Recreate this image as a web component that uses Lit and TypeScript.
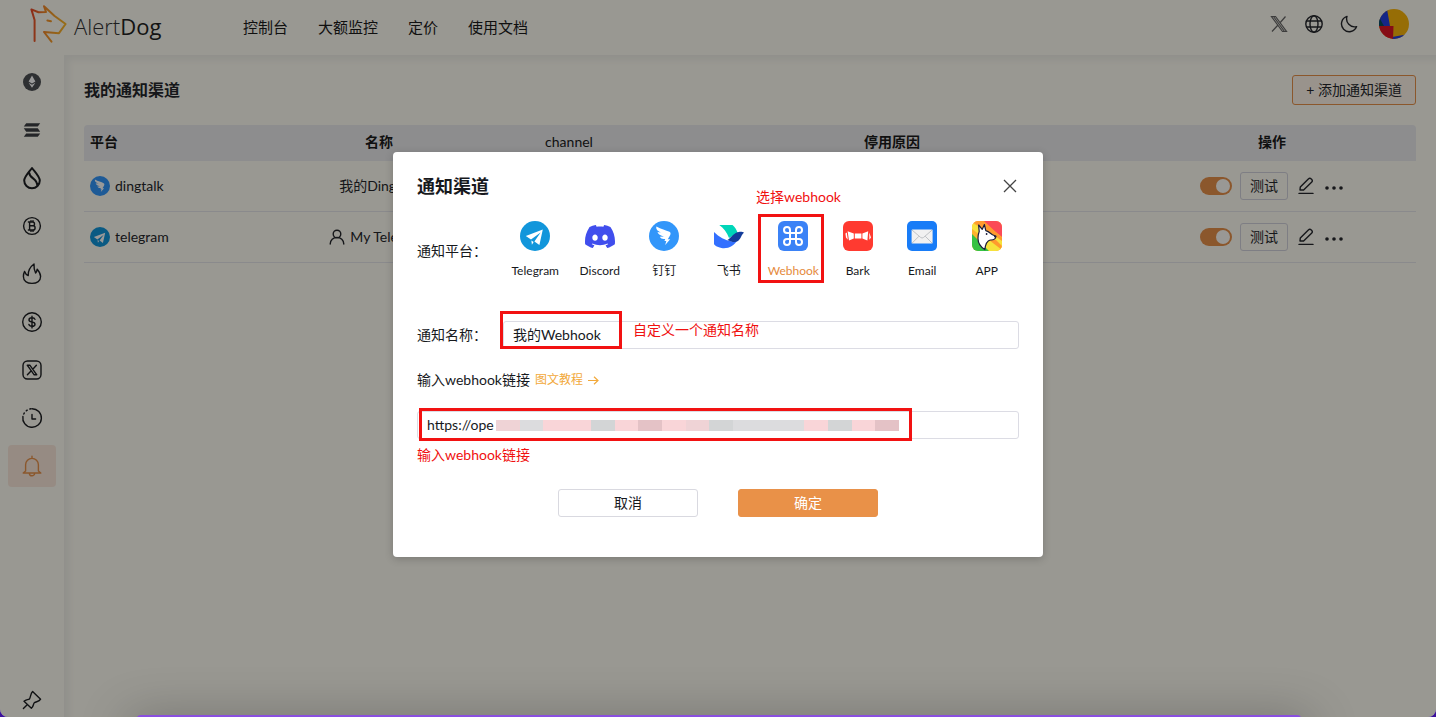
import { LitElement, html, css, svg } from "lit";
import { customElement, state } from "lit/decorators.js";

const telegram = svg`
  <circle cx="15" cy="15" r="15" fill="#1296db"></circle>
  <path fill="#fff" d="M5.8 15 22.8 8.5 19.4 24 14.4 20.4 20.6 11.6 11 18.6Z"></path>
  <path fill="#fff" d="M11.4 19.4 13.6 20.9 11.9 23.8Z"></path>`;

const dingtalk = svg`
  <circle cx="15" cy="15" r="15" fill="#3296fa"></circle>
  <path fill="#fff" d="M7.4 5.4C12 8 17 9 20.5 10.8 22 11.8 21.7 13 21 14.5L18.8 18.2H21.2L16.2 24 17.3 19.9H15.5L16.2 17.9C13.5 18.5 12 17.5 10.8 15.8L15 15.6C11.5 14.8 9 13.2 8.5 11L13 11.8C9.5 10.5 6.5 8.5 7.4 5.4Z"></path>`;

const discord = svg`
  <g transform="translate(0 .5) scale(1.25)"><path fill="#404eed" d="M20.317 4.37a19.79 19.79 0 0 0-4.885-1.515.074.074 0 0 0-.079.037c-.21.375-.444.865-.608 1.25-1.845-.277-3.68-.277-5.487 0-.163-.394-.405-.875-.617-1.25a.077.077 0 0 0-.079-.037 19.736 19.736 0 0 0-4.885 1.515.07.07 0 0 0-.032.028C.533 9.046-.319 13.58.099 18.058a.082.082 0 0 0 .031.056c2.053 1.508 4.041 2.423 5.993 3.03a.078.078 0 0 0 .084-.028c.462-.63.873-1.295 1.226-1.994a.076.076 0 0 0-.042-.106c-.652-.248-1.274-.55-1.872-.892a.077.077 0 0 1-.008-.128c.126-.094.252-.192.372-.291a.074.074 0 0 1 .078-.011c3.928 1.794 8.18 1.794 12.061 0a.074.074 0 0 1 .079.01c.12.099.246.198.373.292a.077.077 0 0 1-.007.128 12.3 12.3 0 0 1-1.873.891.077.077 0 0 0-.04.107c.36.698.771 1.363 1.225 1.993a.076.076 0 0 0 .084.029c1.961-.607 3.95-1.522 6.002-3.03a.077.077 0 0 0 .032-.055c.5-5.177-.838-9.674-3.549-13.66a.061.061 0 0 0-.031-.029zM8.02 15.331c-1.183 0-2.157-1.086-2.157-2.419s.956-2.419 2.157-2.419c1.21 0 2.176 1.095 2.157 2.419 0 1.333-.956 2.419-2.157 2.419zm7.975 0c-1.183 0-2.157-1.086-2.157-2.419s.955-2.419 2.157-2.419c1.21 0 2.176 1.095 2.157 2.419 0 1.333-.946 2.419-2.157 2.419z"></path></g>`;

const feishu = svg`
  <path fill="#00d6b9" d="M5.3 4H18.5C21 6 23 9.5 23.6 12L15 17C13 11.5 9.5 7 5.3 4Z"></path>
  <path fill="#3370ff" d="M0 11C5 16 11 19.5 18 20.6 20.4 20.8 22.4 19.5 23.6 18.5 20.5 25 14 28 7.5 27 2.5 26 0 24 0 22.8Z"></path>
  <path fill="#133c9a" d="M13.4 19C18 16 20 11.2 25 10.9 27.5 10.7 29 11 30 11.8 27.3 13.6 27 18 24 20 21 22 17.4 20.8 13.4 19Z"></path>`;

const webhook = svg`
  <rect width="30" height="30" rx="6" fill="#3b82f6"></rect>
  <path transform="translate(3 3)" fill="none" stroke="#fff" stroke-width="2" d="M15 6v12a3 3 0 1 0 3-3H6a3 3 0 1 0 3 3V6a3 3 0 1 0-3 3h12a3 3 0 1 0-3-3"></path>`;

const bark = svg`
  <rect width="30" height="30" rx="6" fill="#ff3a30"></rect>
  <path fill="#fff" d="M11.8 12.6H18.4V17.6H11.8ZM10.8 12.4 4.6 10.2 6 19.6 10.8 17.6ZM19.4 12.4 25.2 10.2 24.4 19.6 19.4 17.6ZM3.8 11.4 2.4 12.4 3 16.6 4.8 18.8ZM26.2 11.4 26.4 18.8 28 16.4Z"></path>`;

const email = svg`
  <rect width="30" height="30" rx="5" fill="#187cf7"></rect>
  <rect x="4.6" y="8.6" width="21" height="14" rx="1" fill="#f1f1f1"></rect>
  <path fill="none" stroke="#b9bcc0" stroke-width=".9" d="M5 9 13.6 16.4Q15.1 17.6 16.6 16.4L25.2 9M5 22.2 12 15.2M25.2 22.2 18.2 15.2"></path>`;

const appDog = svg`
  <clipPath id="app-clip"><rect width="30" height="30" rx="6"></rect></clipPath>
  <g clip-path="url(#app-clip)">
    <rect width="30" height="30" fill="#fcb32c"></rect>
    <path fill="#fb4a57" d="M10 0H30V16Z"></path>
    <path fill="#ff9a2e" d="M0 0H12L30 17V20L16 12Z"></path>
    <path fill="#f7e23c" d="M0 8 30 30V20L16 10 0 2Z"></path>
    <path fill="#f7e23c" d="M10 18 30 22V30H12Z"></path>
    <path fill="#ff9a2e" d="M17 19 24 19 30 25V29Z"></path>
    <path fill="#35c244" d="M0 13 17 30H0Z"></path>
  </g>
  <path fill="#fff" stroke="#1a1c3a" stroke-width="1.2" stroke-linejoin="round" d="M7.2 10.5 6.6 4 10.2 8.4 12.4 3.6 13.8 9.6C17 10.6 18.6 12.6 20.5 13.8L24 15.2C23.6 18.4 21.6 19.2 18.2 19 15.4 19.6 13.6 22 12.8 28.6 8 25.5 6 22 6 17.5 6 14.5 6.4 12.5 7.2 10.5Z"></path>
  <circle cx="14.6" cy="13" r=".9" fill="#1a1c3a"></circle>
  <circle cx="23" cy="15.6" r="1" fill="#1a1c3a"></circle>`;

const platforms = [
  { id: "telegram", label: "Telegram", icon: telegram },
  { id: "discord", label: "Discord", icon: discord },
  { id: "dingtalk", label: "钉钉", icon: dingtalk },
  { id: "feishu", label: "飞书", icon: feishu },
  { id: "webhook", label: "Webhook", icon: webhook },
  { id: "bark", label: "Bark", icon: bark },
  { id: "email", label: "Email", icon: email },
  { id: "app", label: "APP", icon: appDog },
];

const sideItems = [
  { label: "Ethereum", icon: svg`<circle cx="12" cy="12" r="9" fill="#4e5054"></circle><path fill="#fff" d="M12 5.6 15.4 11.6 12 13.6 8.6 11.6ZM8.6 12.8 12 14.8 15.4 12.8 12 17.8Z"></path>` },
  { label: "Solana", icon: svg`<path fill="#3d3f43" d="M6.2 5.2H20.2L17.8 8.6H3.8ZM3.8 10.3H17.8L20.2 13.7H6.2ZM6.2 15.4H20.2L17.8 18.8H3.8Z"></path>` },
  { label: "Sui", icon: svg`<path class="bold" d="M12 2C15 6 19.8 10.6 19.8 14.6A7.8 7.6 0 0 1 4.2 14.6C4.2 10.6 9 6 12 2ZM9.2 6.4C9.2 13 18 12 17.2 20"></path>` },
  { label: "Bitcoin", icon: svg`<circle cx="12" cy="12" r="8.4"></circle><path d="M9.6 8V16H13A2.1 2.1 0 0 0 13 11.8H9.6M9.6 8H12.6A1.9 1.9 0 0 1 12.6 11.8M8.4 8H9.6M8.4 16H9.6M11 6.6V8M13 6.6V8M11 16V17.4M13 16V17.4"></path>` },
  { label: "热门", icon: svg`<path d="M4.6 9.4C5.4 11.6 6.4 12.8 8.2 13.6 8 10.4 9.4 5.4 14 2 13.8 5.400 14.2 8.200 15.600 11 16.600 9.800 17 8.600 17.200 7.200 19.600 10 20.600 12.400 20.600 14.600 20.600 18.800 17 21.400 12 21.400 7 21.400 3.400 18.800 3.400 14.600 3.400 12.600 3.800 11 4.600 9.400Z"></path>` },
  { label: "资金", icon: svg`<circle cx="12" cy="12" r="9.3"></circle><path d="M15 9.4C14.6 8.2 13.6 7.8 12 7.8 10.2 7.8 9 8.5 9 9.9 9 13 15 10.9 15 14.2 15 15.6 13.8 16.3 12 16.3 10.3 16.3 9.2 15.7 8.9 14.4M12 6.2V17.9"></path>` },
  { label: "X", icon: svg`<rect x="3" y="3" width="18" height="18" rx="4.5"></rect><path d="M7.2 7.2H9.8L16.8 16.8H14.2ZM16.4 7.2 12.8 11.2M11 13 7.4 16.8"></path>` },
  { label: "历史", icon: svg`<path d="M12 2.7A9.3 9.3 0 1 1 2.9 10.5M12 8.4V13H15.6"></path><path stroke-dasharray="1.2 2.8" d="M3.8 8A9.3 9.3 0 0 1 11 2.8"></path>` },
  { label: "通知", active: true, icon: svg`<path d="M5.6 17V10.8A6.4 6.4 0 0 1 18.4 10.8V17L20.8 19H3.2ZM12 2.2V4.2M9.4 19.4A2.6 2.4 0 0 0 14.6 19.4"></path>` },
];

@customElement("app-root")
export class AppRoot extends LitElement {
  @state() private selected = "webhook";

  static styles = css`
    :host {
      display: block;
      font-family: Lato, "Noto Sans CJK SC", sans-serif;
      font-size: 14px;
      line-height: 20px;
      color: #25272c;
    }
    * { box-sizing: border-box; }
    button, input { font: inherit; color: inherit; margin: 0; }
    button { cursor: pointer; }
    a { color: inherit; text-decoration: none; }
    svg { display: block; flex: none; }

    .page {
      position: relative;
      display: grid;
      grid-template: 55px 1fr / 64px 1fr;
      height: 100vh;
      overflow: hidden;
      background: #fffdf3;
      border-radius: 0 0 8px 8px;
    }
    .backdrop { background: #3b0f9c; }
    .header {
      grid-column: 1 / 3;
      display: flex;
      align-items: center;
      padding: 0 27px 0 30px;
    }
    .logo { display: flex; align-items: center; gap: 6px; width: 213px; padding-bottom: 8px; }
    .wordmark { font: 300 22px/30px "Open Sans", sans-serif; color: #333; margin-top: 4px; }
    .wordmark b { font-weight: 400; color: #222; }
    .nav { display: flex; gap: 30px; font-size: 15px; flex: 1; color: #1b1b1b; padding-bottom: 2px; }
    .tools { display: flex; align-items: center; gap: 17px; padding-bottom: 8px; }
    .tools .avatar { margin-left: 4px; }
    .icon-button { display: block; border: 0; padding: 0; background: none; }

    .line { fill: none; stroke: currentColor; stroke-width: 1.4; stroke-linecap: round; stroke-linejoin: round; }
    .bold { stroke-width: 2; }

    .side { display: flex; flex-direction: column; align-items: center; gap: 6px; padding: 6px 0; color: #1d1f22; }
    .side-item { display: grid; place-items: center; width: 48px; height: 42px; border-radius: 4px; }
    .side-item.active { background: #fae8da; color: #e8914a; }
    .side-item.pin { margin-top: auto; height: 22px; }

    .main { padding: 20px; box-shadow: inset 5px 5px 6px #f1f0e8; }
    .title-row { display: flex; align-items: center; justify-content: space-between; margin-bottom: 20px; }
    .title { margin: 0; font-size: 16px; font-weight: 700; line-height: 24px; }
    .add { height: 30px; padding: 0 13px; border: 1px solid #e8914a; border-radius: 3px; background: #fff6ea; }

    .table { width: 100%; border-collapse: separate; border-spacing: 0; table-layout: fixed; text-align: center; }
    .table th { height: 36px; padding: 0 6px 2px; background: #ebebed; font-weight: 700; color: #1b1b1b; }
    .table th:first-child { border-radius: 4px 0 0 0; }
    .table th:last-child { border-radius: 0 4px 0 0; }
    .table td { height: 51px; padding: 0 6px; border-bottom: 1px solid #e6e6e9; }
    .table .first { text-align: left; }
    .table .latin { font-weight: 400; }
    .c-platform { width: 192px; }
    .c-name { width: 206px; }
    .c-channel { width: 174px; }
    .c-action { width: 288px; }
    .cell { display: flex; align-items: center; gap: 5px; }
    .cell.centered { justify-content: center; }
    .actions { display: flex; align-items: center; justify-content: center; gap: 8px; }
    .switch {
      appearance: none; width: 32px; height: 18px; border-radius: 9px; background: #bbb;
      display: flex; justify-content: flex-start; padding: 2px;
    }
    .switch::before { content: ""; width: 14px; height: 14px; border-radius: 50%; background: #fffdf8; }
    .switch:checked { background: #e8914a; justify-content: flex-end; }
    .test { width: 48px; height: 28px; padding: 0; border: 1px solid #d2d2dc; border-radius: 3px; background: none; }
    .more { padding-top: 4px; }

    .mask {
      position: absolute;
      inset: 0;
      display: flex;
      justify-content: center;
      align-items: flex-start;
      padding-top: 152px;
      background: rgba(0, 0, 0, 0.4);
    }
    .glow {
      position: absolute;
      left: 136px;
      right: 134px;
      bottom: -8px;
      height: 10px;
      border-radius: 8px;
      background: #8a4fe0;
      box-shadow: 0 14px 50px 10px rgba(0, 0, 0, 0.3);
    }
    .modal {
      position: relative;
      width: 650px;
      padding: 22px 24px 40px;
      border-radius: 4px;
      background: #fff;
      box-shadow: 0 2px 8px rgba(0, 0, 0, 0.2);
      color: #17191d;
    }
    .modal-head { display: flex; align-items: center; justify-content: space-between; }
    .modal-title { margin: 0; font-size: 18px; line-height: 24px; font-weight: 700; }
    .close { width: 18px; height: 18px; color: #444; }
    .platforms { display: grid; grid-template-columns: 86px 1fr; align-items: center; margin: 23px 0 41px; padding: 0; border: 0; }
    .options { display: grid; grid-template-columns: repeat(8, 1fr); }
    .option { display: flex; flex-direction: column; align-items: center; gap: 11px; font-size: 12px; line-height: 18px; cursor: pointer; }
    .option.on { color: #e58a3c; }
    .option input { position: absolute; opacity: 0; pointer-events: none; }
    .field { display: grid; grid-template-columns: 86px 1fr; align-items: center; }
    .text { width: 100%; height: 28px; padding: 0 9px 2px; border: 1px solid #dcdce4; border-radius: 3px; background: #fff; outline: none; }
    .hook-label { display: flex; align-items: center; gap: 5px; margin: 21px 0; }
    .guide { display: flex; align-items: center; gap: 5px; font-size: 12px; color: #f2a93b; }
    .buttons { display: flex; justify-content: center; gap: 40px; margin-top: 50px; }
    .btn { width: 140px; height: 28px; padding: 0; border: 1px solid #d9d9e0; border-radius: 3px; background: #fff; }
    .btn.primary { border-color: #e8914a; background: #e99148; color: #fff; }

    .note { position: absolute; color: #f01010; white-space: nowrap; }
    .note.n1 { left: 363px; top: 35px; }
    .note.n2 { left: 240px; top: 168px; }
    .note.n3 { left: 24px; top: 293px; }
    .mark { position: absolute; border: 3px solid #f21212; pointer-events: none; }
    .mark.m1 { left: 365px; top: 62px; width: 66px; height: 69px; }
    .mark.m2 { left: 107px; top: 159px; width: 122px; height: 38px; }
    .mark.m3 { left: 26px; top: 256px; width: 493px; height: 33px; }
    .mosaic { position: absolute; left: 103px; top: 268px; display: flex; width: 403px; height: 11px; }
    .mosaic i { flex: 1; }
    .mosaic .p { background: #f9d5d8; }
    .mosaic .g { background: #d3d5d6; }
    .mosaic .l { background: #efd3d6; }
    .mosaic .d { background: #e4c2c6; }
    .mosaic .w { background: #dcdcde; }
  `;

  private actions(name: string) {
    return html`<div class="actions">
      <input class="switch" type="checkbox" role="switch" checked aria-label="启用 ${name}" />
      <button class="test">测试</button>
      <button class="icon-button" aria-label="编辑">
        <svg class="line" width="20" height="20" viewBox="0 0 20 20"><path d="M3 17.4H17M4 14 4.3 11 12.6 2.8A1.6 1.6 0 0 1 15 2.8L15.8 3.6A1.6 1.6 0 0 1 15.8 6L7.6 14Z"></path></svg>
      </button>
      <button class="icon-button more" aria-label="更多">
        <svg width="20" height="6" viewBox="0 0 20 6" fill="currentColor"><circle cx="3" cy="3" r="1.8"></circle><circle cx="10" cy="3" r="1.8"></circle><circle cx="17" cy="3" r="1.8"></circle></svg>
      </button>
    </div>`;
  }

  private icon(content: unknown, size: number) {
    return html`<svg width=${size} height=${size} viewBox="0 0 30 30" aria-hidden="true">${content}</svg>`;
  }

  render() {
    return html`<div class="backdrop"><div class="page">
      <header class="header">
        <a class="logo" href="#">
          <svg width="38" height="42" viewBox="0 0 38 42" fill="none" stroke="url(#logo-grad)" stroke-width="2" stroke-linejoin="round" stroke-linecap="round">
            <defs><linearGradient id="logo-grad" gradientUnits="userSpaceOnUse" x1="1" y1="0" x2="34" y2="0"><stop offset="0" stop-color="#e8482a"></stop><stop offset=".45" stop-color="#f5902a"></stop><stop offset="1" stop-color="#fbb62c"></stop></linearGradient></defs>
            <path d="M4.600 38V17L1.400 6.400 8.500 9.200 16 9 14 3.200 24.600 13 35.600 21 29 30.200 14 29 21.500 38.600M17.400 17.400 21 18.200"></path>
          </svg>
          <span class="wordmark">Alert<b>Dog</b></span>
        </a>
        <nav class="nav">
          <a href="#">控制台</a><a href="#">大额监控</a><a href="#">定价</a><a href="#">使用文档</a>
        </nav>
        <div class="tools">
          <a href="#" aria-label="X"><svg width="18" height="18" viewBox="0 0 18 18" fill="none" stroke="#666" stroke-width="1.2"><path d="M1.5 1.5H5.5L16.5 16.5H12.5ZM3.5 1.5 14.5 16.5M15.5 1.5 9.8 8M8 10 2 16.5"></path></svg></a>
          <button class="icon-button" aria-label="语言"><svg class="line" width="18" height="18" viewBox="0 0 18 18"><circle cx="9" cy="9" r="8.2"></circle><ellipse cx="9" cy="9" rx="4" ry="8.2"></ellipse><path d="M1.6 6H16.4M1.6 12H16.4"></path></svg></button>
          <button class="icon-button" aria-label="深色模式"><svg class="line" width="18" height="18" viewBox="0 0 18 18"><path d="M7 1.4A7.8 7.8 0 1 0 16.6 11.6 8 8 0 0 1 7 1.4Z"></path></svg></button>
          <button class="icon-button avatar" aria-label="账户"><svg width="30" height="30" viewBox="0 0 30 30">
            <clipPath id="avatar-clip"><circle cx="15" cy="15" r="15"></circle></clipPath>
            <g clip-path="url(#avatar-clip)"><rect width="30" height="30" fill="#fbb60a"></rect><path fill="#2440e0" d="M0 0H8L11 17H0ZM13 28 30 25V30H13Z"></path><path fill="#06505c" d="M0 8 5 17H0Z"></path><path fill="#e01626" d="M0 17H14.5L14 30H0Z"></path></g>
          </svg></button>
        </div>
      </header>

      <nav class="side" aria-label="侧边栏">
        ${sideItems.map((s) => html`<a class="side-item ${s.active ? "active" : ""}" href="#" aria-label=${s.label}><svg class="${s.label === "Ethereum" || s.label === "Solana" ? "" : "line"}" width="24" height="24" viewBox="0 0 24 24">${s.icon}</svg></a>`)}
        <button class="icon-button side-item pin" aria-label="固定"><svg class="line" width="20" height="20" viewBox="0 0 20 20"><path d="M1.4 18.6 5.2 14.8M2 11.2C4 9.6 6 9.8 7.6 8.8 8.8 6.4 8.6 3.4 10.6 1.6L18.6 9.2C17.2 11.8 14.6 11.4 12.4 12.6 11 14.2 11.6 16.6 9.4 18.2Z"></path></svg></button>
      </nav>

      <main class="main">
        <div class="title-row">
          <h1 class="title">我的通知渠道</h1>
          <button class="add">+ 添加通知渠道</button>
        </div>
        <table class="table">
          <colgroup><col class="c-platform" /><col class="c-name" /><col class="c-channel" /><col /><col class="c-action" /></colgroup>
          <thead><tr><th class="first">平台</th><th>名称</th><th class="latin">channel</th><th>停用原因</th><th>操作</th></tr></thead>
          <tbody>
            <tr>
              <td><div class="cell">${this.icon(dingtalk, 20)}dingtalk</div></td>
              <td>我的DingTalk</td><td></td><td></td><td>${this.actions("dingtalk")}</td>
            </tr>
            <tr>
              <td><div class="cell">${this.icon(telegram, 20)}telegram</div></td>
              <td><div class="cell centered"><svg class="line" width="16" height="16" viewBox="0 0 16 16"><circle cx="8" cy="5" r="3.8"></circle><path d="M1.2 15A6.8 6.6 0 0 1 14.8 15"></path></svg>My Telegram</div></td>
              <td></td><td></td><td>${this.actions("telegram")}</td>
            </tr>
          </tbody>
        </table>
      </main>

      <div class="mask">
        <section class="modal" role="dialog" aria-labelledby="dlg-title">
          <div class="modal-head">
            <h2 class="modal-title" id="dlg-title">通知渠道</h2>
            <button class="icon-button close" aria-label="关闭"><svg width="18" height="18" viewBox="0 0 18 18" fill="none" stroke="currentColor" stroke-width="1.3"><path d="M3 3 15 15M15 3 3 15"></path></svg></button>
          </div>
          <div class="platforms" role="radiogroup" aria-labelledby="pf">
            <span id="pf">通知平台：</span>
            <div class="options">
              ${platforms.map((p) => html`<label class="option ${this.selected === p.id ? "on" : ""}">
                <input type="radio" name="platform" .checked=${this.selected === p.id} @change=${() => (this.selected = p.id)} />
                ${this.icon(p.icon, 30)}<span>${p.label}</span></label>`)}
            </div>
          </div>
          <div class="field">
            <label for="name">通知名称：</label>
            <input class="text" id="name" type="text" value="我的Webhook" />
          </div>
          <div class="hook-label">
            <label for="url">输入webhook链接</label>
            <a class="guide" href="#">图文教程<svg width="11" height="9" viewBox="0 0 11 9" fill="none" stroke="currentColor" stroke-width="1.2"><path d="M0 4.5H10M6 .7 10 4.5 6 8.3"></path></svg></a>
          </div>
          <input class="text" id="url" type="text" value="https://ope" />
          <div class="buttons">
            <button class="btn">取消</button>
            <button class="btn primary">确定</button>
          </div>
          <div class="mosaic">${[..."lwppgpdplgwwwpgpd"].map((c) => html`<i class=${c}></i>`)}</div>
          <div class="mark m1"></div><div class="mark m2"></div><div class="mark m3"></div>
          <div class="note n1">选择webhook</div>
          <div class="note n2">自定义一个通知名称</div>
          <div class="note n3">输入webhook链接</div>
        </section>
      </div>
      <div class="glow"></div>
    </div></div>`;
  }
}
